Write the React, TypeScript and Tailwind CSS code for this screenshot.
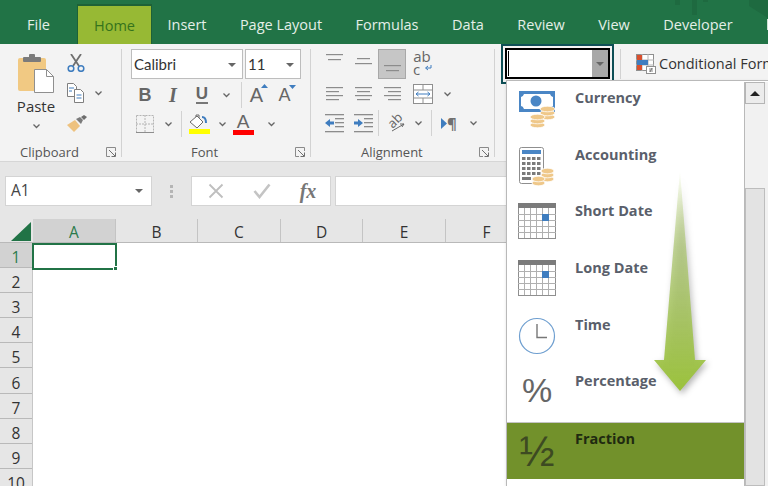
import React from "react";

const UI = "font-['Open_Sans','Noto_Sans',sans-serif]";

const tabs = [
  { label: "File", w: "w-[77px]" },
  { label: "Home", w: "w-[75px]", active: true },
  { label: "Insert", w: "w-[70px]" },
  { label: "Page Layout", w: "w-[118px]" },
  { label: "Formulas", w: "w-[94px]" },
  { label: "Data", w: "w-[68px]" },
  { label: "Review", w: "w-[78px]" },
  { label: "View", w: "w-[68px]" },
  { label: "Developer", w: "w-[100px]" },
];

const columns = [
  { label: "A", w: "w-[83px]", active: true },
  { label: "B", w: "w-[82px]" },
  { label: "C", w: "w-[83px]" },
  { label: "D", w: "w-[82px]" },
  { label: "E", w: "w-[83px]" },
  { label: "F", w: "w-[82px]" },
];

const rows = ["1", "2", "3", "4", "5", "6", "7", "8", "9", "10"];

const Chevron = () => (
  <svg width="9" height="6" viewBox="0 0 9 6" fill="none">
    <path d="M1.5 1.5 4.5 4.5 7.5 1.5" stroke="#666" strokeWidth="1.3" />
  </svg>
);

const Caret = () => (
  <svg width="8" height="4" viewBox="0 0 8 4">
    <path d="M0 0h8L4 4z" fill="#666" />
  </svg>
);

const Launcher = () => (
  <svg width="10" height="10" viewBox="0 0 10 10" fill="none">
    <path d="M9.5 4V.5H.5v9H4" stroke="#8a8a8a" />
    <path d="M3 3l6 6M5.5 9.5h4v-4" stroke="#6f6f6f" />
  </svg>
);

const VDivider = ({ h = "h-[26px]" }: { h?: string }) => <div className={`w-px ${h} bg-[#d2d2d2] shrink-0`} />;

const Cell = ({ w, children }: { w: string; children?: React.ReactNode }) => (
  <div className={`${w} h-full flex items-center justify-center shrink-0`}>{children}</div>
);

const GroupLabel = ({ children }: { children: React.ReactNode }) => (
  <span className="text-[13px] leading-[18px] text-[#555]">{children}</span>
);

const Lines = ({ widths, gap = 4, align = "left" }: { widths: number[]; gap?: number; align?: string }) => {
  const maxW = Math.max(...widths);
  return (
    <svg width={maxW} height={gap * (widths.length - 1) + 2}>
      {widths.map((w, i) => (
        <rect
          key={i}
          x={align === "left" ? 0 : align === "right" ? maxW - w : (maxW - w) / 2}
          y={i * gap}
          width={w}
          height="1.2"
          fill="#8c8c8c"
        />
      ))}
    </svg>
  );
};

const PasteIcon = () => (
  <svg width="37" height="39" viewBox="0 0 37 39">
    <rect x="0" y="4" width="28" height="33" rx="2" fill="#f1c983" />
    <rect x="5" y="3" width="18" height="5" rx="1" fill="#7b7b7b" />
    <rect x="11" y="0" width="6" height="4" rx="1" fill="#7b7b7b" />
    <path d="M16.500 15.500h12l7 7v16h-19z" fill="#fff" stroke="#8f8f8f" />
    <path d="M28.500 15.500v7h7" fill="none" stroke="#8f8f8f" />
  </svg>
);

const ScissorsIcon = () => (
  <svg width="18" height="18" viewBox="0 0 18 18" fill="none">
    <path d="M4 0 12 12M14 0 6 12" stroke="#6f6f6f" strokeWidth="1.800" />
    <circle cx="4" cy="14.500" r="2.800" stroke="#3f7dbf" strokeWidth="1.500" />
    <circle cx="14" cy="14.500" r="2.800" stroke="#3f7dbf" strokeWidth="1.500" />
  </svg>
);

const CopyIcon = () => (
  <svg width="18" height="20" viewBox="0 0 18 20" fill="#fff" stroke="#7f7f7f">
    <path d="M.5.5h6l3 3v10h-9z" />
    <path d="M7.5 6.500h6l3 3v10h-9z" />
    <path d="M2 5h5M2 8h3" stroke="#3f7dbf" />
    <path d="M9.500 12h5M9.500 15h5" stroke="#3f7dbf" />
  </svg>
);

const BrushIcon = () => (
  <svg width="20" height="18" viewBox="0 0 20 18">
    <path d="M0 10 8 5l5 6-6 6z" fill="#eec27f" />
    <path d="M9 4l4-2 3 3-2 4z" fill="#7b7b7b" />
    <path d="M14 2l3-2 3 2-3 3z" fill="#6d6d6d" />
  </svg>
);

const BorderIcon = () => (
  <svg width="18" height="18" viewBox="0 0 18 18" fill="none">
    <rect x="0.5" y="0.5" width="17" height="17" stroke="#b4b4b4" strokeDasharray="2 1" />
    <path d="M9 0v18M0 9h18" stroke="#b4b4b4" strokeDasharray="2 1" />
    <path d="M0 17.500h18" stroke="#8d8d8d" />
  </svg>
);

const FillIcon = () => (
  <div className="flex flex-col items-center">
    <svg width="20" height="15" viewBox="0 0 20 15" fill="none">
      <path d="M1 8 8 2l6 6-6 6z" fill="#fff" stroke="#6b6b6b" />
      <path d="M7 3V1h3v3" stroke="#6b6b6b" />
      <path d="M13 3c3 0 4 2 4 6" stroke="#3f7dbf" strokeWidth="2" />
    </svg>
    <div className="w-[21px] h-[5px] bg-[#ffff00]" />
  </div>
);

const SizeArrow = ({ up }: { up?: boolean }) => (
  <svg width="7" height="4" viewBox="0 0 7 4" className="absolute -right-[5px] -top-[1px]">
    <path d={up ? "M0 4h7L3.5 0z" : "M0 0h7L3.5 4z"} fill="#3f7dbf" />
  </svg>
);

const WrapIcon = () => (
  <div className="relative w-[22px] h-[26px] flex flex-col items-center">
    <span className="text-[15px] leading-[14px] text-[#666]">ab</span>
    <span className="text-[15px] leading-[12px] text-[#666] self-start pl-[2px]">c</span>
    <svg width="8" height="7" viewBox="0 0 8 7" fill="none" className="absolute right-[1px] bottom-[3px]">
      <path d="M7 0v3H2M4 1 1.500 3 4 5" stroke="#3f7dbf" />
    </svg>
  </div>
);

const MergeIcon = () => (
  <svg width="20" height="20" viewBox="0 0 20 20" fill="#fff">
    <rect x="0.500" y="0.500" width="19" height="19" stroke="#8f8f8f" />
    <path d="M0 6h20M0 14h20M10 0v6M10 14v6" stroke="#8f8f8f" />
    <path d="M3 10h14M5.500 8 3 10l2.500 2M14.500 8 17 10l-2.500 2" fill="none" stroke="#3f7dbf" />
  </svg>
);

const IndentIcon = ({ flip }: { flip?: boolean }) => (
  <svg width="19" height="19" viewBox="0 0 19 19">
    {[0, 17].map((y) => (
      <rect key={y} x="0" y={y} width="19" height="1.300" fill="#8c8c8c" />
    ))}
    {[4, 8, 12].map((y) => (
      <rect key={y} x="10" y={y} width="9" height="1.300" fill="#8c8c8c" />
    ))}
    <path
      d={flip ? "M0 7.500h4V5l5 4-5 4v-2.500H0z" : "M9 7.500H5V5L0 9l5 4v-2.500h4z"}
      fill="#3f7dbf"
    />
  </svg>
);

const OrientationIcon = () => (
  <div className="relative w-[20px] h-[20px]">
    <span className="absolute left-[1px] top-[0px] text-[13px] leading-[14px] text-[#666] -rotate-45">ab</span>
    <svg width="20" height="20" viewBox="0 0 20 20" fill="none" className="absolute left-0 top-0">
      <path d="M6 18 18 11M18 11l-4 0M18 11l-2 3" stroke="#666" />
    </svg>
  </div>
);

const RtlIcon = () => (
  <div className="flex items-center">
    <svg width="6" height="11" viewBox="0 0 6 11">
      <path d="M0 0l6 5.500L0 11z" fill="#3f7dbf" />
    </svg>
    <span className="text-[15px] leading-[16px] text-[#707070] font-bold">¶</span>
  </div>
);

const ConditionalIcon = () => (
  <svg width="20" height="20" viewBox="0 0 20 20" className="shrink-0">
    <rect x="0.500" y="0.500" width="17" height="16" fill="#fff" stroke="#8f8f8f" />
    <path d="M0 6h18M0 11h18M6 0v17M12 0v17" stroke="#b5b5b5" />
    <rect x="1" y="1" width="5" height="5" fill="#d9502e" />
    <rect x="1" y="6" width="11" height="5" fill="#3f7dbf" />
    <rect x="1" y="11" width="5" height="5" fill="#d9502e" />
    <rect x="10.500" y="12.500" width="9" height="7" fill="#fff" stroke="#8f8f8f" />
    <path d="M13 15h4M13 17h4M16 14l-2 4" stroke="#555" strokeWidth="0.700" />
  </svg>
);

const CoinStack = ({ x, y, n, w = 15 }: { x: number; y: number; n: number; w?: number }) => (
  <g>
    {Array.from({ length: n }).map((_, i) => (
      <ellipse
        key={i}
        cx={x + w / 2}
        cy={y + (n - 1 - i) * 4}
        rx={w / 2}
        ry="2.800"
        fill="#efc88a"
        stroke="#fff"
        strokeWidth="0.800"
      />
    ))}
  </g>
);

const CurrencyIcon = () => (
  <svg width="38" height="38" viewBox="0 0 38 38">
    <path d="M1 1h36v21H1z" fill="#4a86c5" />
    <path d="M6 4h26q1 3 3 3v9q-2 0-3 3H6q-1-3-3-3V7q2 0 3-3z" fill="#fff" />
    <circle cx="18" cy="11" r="5.500" fill="#4a86c5" />
    <CoinStack x={22} y={19} n={3} />
    <CoinStack x={12} y={27} n={3} />
  </svg>
);

const AccountingIcon = () => (
  <svg width="36" height="40" viewBox="0 0 36 40">
    <rect x="0.500" y="0.500" width="24" height="36" rx="2" fill="#fff" stroke="#8f8f8f" />
    <rect x="3" y="3" width="19" height="4" fill="#4a86c5" />
    {[10, 15, 20, 25].map((y) =>
      [3, 8, 13, 18].map((x) => <rect key={`${x}-${y}`} x={x} y={y} width="3.500" height="3" fill="#7b7b7b" />)
    )}
    <rect x="3" y="30" width="9" height="3" fill="#7b7b7b" />
    <CoinStack x={22} y={24} n={3} w={13} />
    <CoinStack x={13} y={32} n={2} w={13} />
  </svg>
);

const CalendarIcon = () => (
  <svg width="38" height="36" viewBox="0 0 38 36" fill="none">
    <rect x="0.500" y="0.500" width="37" height="35" fill="#fff" stroke="#8f8f8f" />
    <rect x="0" y="0" width="38" height="5" fill="#7b7b7b" />
    {[6.500, 12.500, 18.500, 24.500, 30.500].map((x) => (
      <path key={x} d={`M${x} 5v30`} stroke="#b0b0b0" />
    ))}
    {[11.500, 17.500, 23.500, 29.500].map((y) => (
      <path key={y} d={`M0 ${y}h38`} stroke="#b0b0b0" />
    ))}
    <rect x="24" y="11" width="7" height="7" fill="#3f7dbf" />
  </svg>
);

const ClockIcon = () => (
  <svg width="38" height="38" viewBox="0 0 38 38" fill="#fff">
    <circle cx="19" cy="19" r="17.500" stroke="#6f9fd0" strokeWidth="1.200" />
    <path d="M19 7v13.500h10" fill="none" stroke="#777" strokeWidth="1.400" />
  </svg>
);

const menuItems: { label: string; icon: React.ReactNode; active?: boolean }[] = [
  { label: "Currency", icon: <CurrencyIcon /> },
  { label: "Accounting", icon: <AccountingIcon /> },
  { label: "Short Date", icon: <CalendarIcon /> },
  { label: "Long Date", icon: <CalendarIcon /> },
  { label: "Time", icon: <ClockIcon /> },
  { label: "Percentage", icon: <span className="text-[34px] leading-none text-[#666] font-['Liberation_Sans',sans-serif]">%</span> },
  {
    label: "Fraction",
    icon: <span className="text-[42px] leading-none text-[#3d4a22] font-['Liberation_Sans',sans-serif] font-light">½</span>,
    active: true,
  },
];

export default function App() {
  return (
    <div className={`relative w-[768px] h-[486px] overflow-hidden bg-white ${UI}`}>
      {/* title tabs */}
      <div className="h-[44px] bg-[#217346] flex items-end relative overflow-hidden">
        <svg width="108" height="20" viewBox="0 0 108 20" className="absolute right-0 top-0">
          <path d="M15 0h5v5h-5zM32 0h5v15h-5zM43 0h5v2h-5zM89 0h19v18L89 6z" fill="#1e6a40" />
        </svg>
        {tabs.map((t) => (
          <div
            key={t.label}
            className={`${t.w} shrink-0 flex items-center justify-center pt-[1px] text-[14.500px] relative ${
              t.active
                ? "h-[40px] bg-[#97b934] border-t-2 border-x border-[#1d6137] border-b-0 text-[#35731c]"
                : "h-[40px] text-[#e4efe8]"
            }`}
          >
            {t.label}
          </div>
        ))}
        <div className="absolute right-0 top-[19px] w-px h-[11px] bg-[#cfe0d5]" />
      </div>

      {/* ribbon */}
      <div className="h-[118px] bg-[#f3f3f3] border-b border-[#d6d6d6] flex text-[#444]">
        {/* clipboard */}
        <div className="w-[121px] shrink-0 flex flex-col">
          <div className="flex flex-1 pt-[10px] pl-[17px]">
            <div className="w-[38px] flex flex-col items-center">
              <PasteIcon />
              <span className="text-[15px] leading-[18px] mt-[4px] text-[#333]">Paste</span>
              <div className="mt-[8px]">
                <Chevron />
              </div>
            </div>
            <div className="flex flex-col items-start pl-[12px] gap-[11px] pt-[0px]">
              <ScissorsIcon />
              <div className="flex items-center gap-[9px]">
                <CopyIcon />
                <Chevron />
              </div>
              <div className="mt-[1px]">
                <BrushIcon />
              </div>
            </div>
          </div>
          <div className="h-[18px] flex items-center pl-[20px]">
            <GroupLabel>Clipboard</GroupLabel>
            <div className="ml-auto mr-[5px] flex">
              <Launcher />
            </div>
          </div>
        </div>
        <VDivider h="h-[108px] mt-[5px]" />

        {/* font */}
        <div className="w-[188px] shrink-0 flex flex-col pl-[9px]">
          <div className="flex gap-[2px] pt-[5px] h-[36px]">
            <div className="w-[112px] h-[30px] bg-white border border-[#bdbdbd] flex items-center pl-[2px] pr-[6px] pt-[1px] text-[15px] font-['Lato',sans-serif] text-[#333]">
              Calibri
              <div className="ml-auto">
                <Caret />
              </div>
            </div>
            <div className="w-[56px] h-[30px] bg-white border border-[#bdbdbd] flex items-center pl-[2px] pr-[6px] pt-[1px] text-[15px] font-['Lato',sans-serif] text-[#333]">
              11
              <div className="ml-auto">
                <Caret />
              </div>
            </div>
          </div>
          <div className="flex items-center h-[30px] text-[#666]">
            <Cell w="w-[28px]">
              <span className="text-[18px] font-bold font-['Liberation_Sans',sans-serif]">B</span>
            </Cell>
            <Cell w="w-[28px]">
              <span className="text-[20px] font-bold italic font-['Liberation_Serif',serif]">I</span>
            </Cell>
            <Cell w="w-[30px]">
              <span className="text-[17px] font-bold font-['Liberation_Sans',sans-serif] border-b-2 border-[#777] leading-[16px]">U</span>
            </Cell>
            <Cell w="w-[18px]">
              <Chevron />
            </Cell>
            <div className="w-[6px]" />
            <VDivider h="h-[26px]" />
            <Cell w="w-[29px]">
              <span className="relative text-[20px] leading-none font-['Liberation_Sans',sans-serif]">
                A
                <SizeArrow up />
              </span>
            </Cell>
            <Cell w="w-[27px]">
              <span className="relative text-[18px] leading-none font-['Liberation_Sans',sans-serif]">
                A
                <SizeArrow />
              </span>
            </Cell>
          </div>
          <div className="flex items-center h-[28px]">
            <Cell w="w-[28px]">
              <BorderIcon />
            </Cell>
            <Cell w="w-[18px]">
              <Chevron />
            </Cell>
            <div className="w-[4px]" />
            <VDivider h="h-[26px]" />
            <div className="w-[3px]" />
            <Cell w="w-[28px]">
              <FillIcon />
            </Cell>
            <Cell w="w-[18px]">
              <Chevron />
            </Cell>
            <Cell w="w-[24px]">
              <div className="flex flex-col items-center">
                <span className="text-[19px] leading-[16px] text-[#666] font-['Liberation_Sans',sans-serif]">A</span>
                <div className="w-[21px] h-[5px] bg-[#ff0000]" />
              </div>
            </Cell>
            <div className="w-[7px]" />
            <Cell w="w-[18px]">
              <Chevron />
            </Cell>
          </div>
          <div className="flex-1 flex items-end pl-[60px]">
            <GroupLabel>Font</GroupLabel>
            <div className="ml-auto mr-[5px] mb-[4px] flex">
              <Launcher />
            </div>
          </div>
        </div>
        <VDivider h="h-[108px] mt-[5px]" />

        {/* alignment */}
        <div className="w-[183px] shrink-0 flex flex-col">
          <div className="flex h-[35px] pt-[5px] pl-[9px]">
            <div className="w-[29px] h-[29px] flex justify-center pt-[5px]">
              <Lines widths={[17, 13]} gap={5} align="center" />
            </div>
            <div className="w-[29px] h-[29px] flex justify-center pt-[9px]">
              <Lines widths={[13, 17]} gap={5} align="center" />
            </div>
            <div className="w-[28px] h-[30px] bg-[#c6c6c6] border border-[#a8a8a8] flex justify-center pt-[15px]">
              <Lines widths={[17, 13]} gap={5} align="center" />
            </div>
            <div className="w-[32px] flex justify-center">
              <WrapIcon />
            </div>
          </div>
          <div className="flex items-center h-[29px] pl-[9px]">
            <Cell w="w-[29px]">
              <Lines widths={[17, 13, 17, 13]} />
            </Cell>
            <Cell w="w-[29px]">
              <Lines widths={[17, 13, 17, 13]} align="center" />
            </Cell>
            <Cell w="w-[29px]">
              <Lines widths={[17, 13, 17, 13]} align="right" />
            </Cell>
            <Cell w="w-[31px]">
              <MergeIcon />
            </Cell>
            <Cell w="w-[18px]">
              <Chevron />
            </Cell>
          </div>
          <div className="flex items-center h-[30px] pl-[9px]">
            <Cell w="w-[29px]">
              <IndentIcon />
            </Cell>
            <Cell w="w-[29px]">
              <IndentIcon flip />
            </Cell>
            <VDivider />
            <Cell w="w-[33px]">
              <OrientationIcon />
            </Cell>
            <Cell w="w-[12px]">
              <Chevron />
            </Cell>
            <div className="w-[7px]" />
            <VDivider />
            <Cell w="w-[34px]">
              <RtlIcon />
            </Cell>
            <Cell w="w-[14px]">
              <Chevron />
            </Cell>
          </div>
          <div className="flex-1 flex items-end pl-[50px]">
            <GroupLabel>Alignment</GroupLabel>
            <div className="ml-auto mr-[5px] mb-[4px] flex">
              <Launcher />
            </div>
          </div>
        </div>
        <VDivider h="h-[108px] mt-[5px]" />

        {/* number format, the dropdown hangs from this box */}
        <div className="w-[125px] shrink-0 pl-[6px] flex">
          <div className="w-[113px] h-[40px] border-[2px] border-[#0e4f56] p-[2px]">
            <div className="h-[31px] border-[2px] border-black bg-white flex">
              <div className="flex-1 pl-[1px] py-[1px]">
                <div className="w-px h-full bg-black" />
              </div>
              <div className="w-[16px] bg-[#a8a8a8] flex items-center justify-center">
                <Caret />
              </div>
            </div>
          </div>
        </div>
        <VDivider h="h-[30px] mt-[5px]" />

        {/* styles */}
        <div className="flex-1 min-w-0 overflow-hidden flex pl-[15px] pt-[5px] h-[34px] items-center gap-[3px]">
          <ConditionalIcon />
          <span className="text-[14.500px] whitespace-nowrap text-[#333]">Conditional Formatting</span>
        </div>
      </div>

      {/* formula bar */}
      <div className="h-[57px] bg-[#e6e6e6] flex items-start pt-[14px] pl-[5px]">
        <div className="w-[147px] h-[30px] bg-white border border-[#d4d4d4] flex items-center pl-[5px] pr-[8px] text-[15.500px] text-[#444]">
          A1
          <div className="ml-auto">
            <Caret />
          </div>
        </div>
        <div className="w-[39px] h-[30px] flex flex-col items-center justify-center gap-[2px]">
          <div className="w-[3px] h-[3px] bg-[#b5b5b5]" />
          <div className="w-[3px] h-[3px] bg-[#b5b5b5]" />
          <div className="w-[3px] h-[3px] bg-[#b5b5b5]" />
        </div>
        <div className="w-[140px] h-[30px] bg-white border border-[#d4d4d4] flex items-center">
          <Cell w="w-[47px]">
            <svg width="16" height="16" viewBox="0 0 16 16" fill="none">
              <path d="M1.500 1.500l13 13M14.500 1.500l-13 13" stroke="#bfbfbf" strokeWidth="1.800" />
            </svg>
          </Cell>
          <Cell w="w-[46px]">
            <svg width="18" height="16" viewBox="0 0 18 16" fill="none">
              <path d="M1.500 8l5 6L16.500 1.500" stroke="#c4c4c4" strokeWidth="2.600" />
            </svg>
          </Cell>
          <Cell w="w-[46px]">
            <span className="text-[20px] font-['Liberation_Serif',serif] italic font-bold text-[#777]">fx</span>
          </Cell>
        </div>
        <div className="w-[172px] h-[30px] ml-[4px] bg-white border border-[#d4d4d4]" />
      </div>

      {/* sheet headers */}
      <div className="h-[24px] bg-[#e6e6e6] flex border-b border-[#b9b9b9] text-[15.500px] text-[#333]">
        <div className="w-[33px] shrink-0 relative">
          <svg width="20" height="19" viewBox="0 0 20 19" className="absolute right-[2px] bottom-[1px]">
            <path d="M20 0v19H0z" fill="#217346" />
          </svg>
        </div>
        {columns.map((c) => (
          <div
            key={c.label}
            className={`${c.w} shrink-0 flex items-end justify-center border-r border-[#c4c4c4] leading-[20px] ${
              c.active ? "bg-[#d2d2d2] text-[#2b7a4b]" : ""
            }`}
          >
            {c.label}
          </div>
        ))}
      </div>

      {/* sheet body */}
      <div className="relative">
        <div className="w-[33px] border-r border-[#c6c6c6]">
          {rows.map((r, i) => (
            <div
              key={r}
              className={`h-[25.100px] flex items-center justify-center pt-[4px] text-[15.500px] leading-[20px] border-b border-[#b9b9b9] ${
                i === 0 ? "bg-[#d2d2d2] text-[#2b7a4b]" : "bg-[#e6e6e6] text-[#333]"
              }`}
            >
              {r}
            </div>
          ))}
        </div>
        <div className="absolute left-[32px] top-0 w-[85px] h-[27px] border-2 border-[#217346]">
          <div className="absolute -right-[3px] -bottom-[3px] w-[5px] h-[5px] bg-[#217346] border border-white" />
        </div>
      </div>

      {/* number format dropdown */}
      <div className="absolute left-[506px] top-[80px] right-0 bottom-0 flex flex-col border-l border-t border-[#b9b9b9] bg-white shadow">
        <div className="flex-1 flex pt-[1px] min-h-0">
          <div className="flex-1 min-w-0 border-r border-[#b9b9b9] flex flex-col">
            {menuItems.map((m) => (
              <div
                key={m.label}
                className={`h-[56.670px] shrink-0 flex ${m.active ? "bg-[#72912b] border-t border-[#c4c4c4]" : ""}`}
              >
                <div className="w-[60px] shrink-0 flex justify-center items-start pt-[8px]">{m.icon}</div>
                <div className="pl-[8px] pt-[5px] text-[14.500px] leading-[22px] font-bold">
                  <span className={m.active ? "text-[#1f2a10]" : "text-[#5a5f6b]"}>{m.label}</span>
                </div>
              </div>
            ))}
          </div>
          <div className="w-[23px] shrink-0 bg-[#f1f1f1] flex flex-col pr-[3px]">
            <div className="h-[22px] bg-[#ececec] border border-[#b5b5b5] flex items-center justify-center">
              <svg width="10" height="5" viewBox="0 0 10 5">
                <path d="M0 5h10L5 0z" fill="#222" />
              </svg>
            </div>
            <div className="h-[84px]" />
            <div className="flex-1 bg-[#e3e3e3] border border-[#bdbdbd]" />
          </div>
        </div>
      </div>

      {/* annotation arrow */}
      <svg width="70" height="235" viewBox="0 0 70 235" className="absolute left-[645px] top-[165px] drop-shadow-[2px_3px_3px_rgba(0,0,0,0.3)]">
        <defs>
          <linearGradient id="arrowFill" x1="0" y1="0" x2="0" y2="1">
            <stop offset="0" stopColor="#9bc23c" stopOpacity="0" />
            <stop offset="0.35" stopColor="#a9c46c" stopOpacity="0.7" />
            <stop offset="1" stopColor="#9bc23c" />
          </linearGradient>
        </defs>
        <path d="M35 5 50 195H61L35 226 9 195H19z" fill="url(#arrowFill)" />
      </svg>
    </div>
  );
}
